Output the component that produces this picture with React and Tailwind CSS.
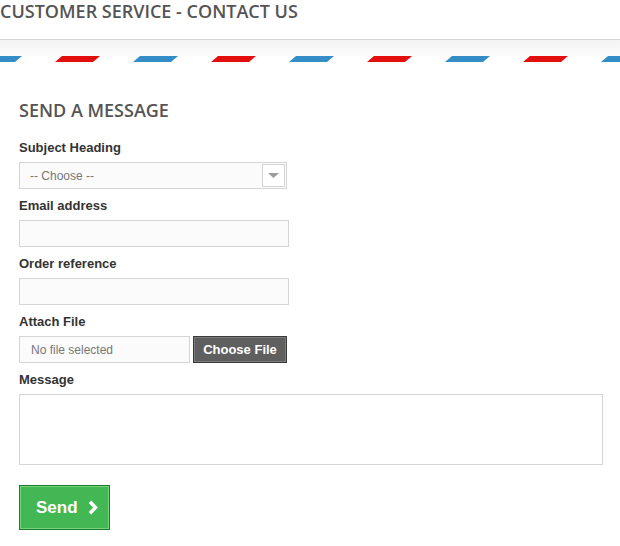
function Airmail() {
    return (
        <svg className="block w-full h-[6px]" xmlns="http://www.w3.org/2000/svg">
            <defs>
                <pattern id="airmail" x="-23" y="0" width="156" height="6" patternUnits="userSpaceOnUse">
                    <polygon points="0,6 7,0 45,0 38,6" fill="#348dc6" />
                    <polygon points="78,6 85,0 123,0 116,6" fill="#e30e0e" />
                </pattern>
            </defs>
            <rect width="100%" height="6" fill="url(#airmail)" />
        </svg>
    );
}

function Field({ label, children }) {
    return (
        <div className="mb-[9px]">
            <label className="block text-[13px] leading-[16px] font-bold text-[#333] mb-[6px]">{label}</label>
            {children}
        </div>
    );
}

export default function App() {
    return (
        <div className="w-[620px] h-[546px] bg-white overflow-hidden font-['Liberation_Sans',Arial,sans-serif]">
            <h1 className="font-['Open_Sans',sans-serif] text-[18px] leading-[22px] font-semibold uppercase text-[#555454] pb-[17px] border-b border-[#d6d4d4]">
                Customer Service - Contact us
            </h1>
            <div className="h-4 bg-gradient-to-b from-[#f3f3f3] to-[#fbfbfb]" />
            <Airmail />

            <form className="pl-[19px] pt-[37px]">
                <h3 className="font-['Open_Sans',sans-serif] text-[18px] leading-[22px] font-semibold uppercase text-[#555454] mb-[19px]">
                    Send a message
                </h3>

                <Field label="Subject Heading">
                    <div className="relative w-[268px] h-[27px] bg-[#fbfbfb] border border-[#d6d4d4] flex items-center pl-[10px] text-[12px] text-[#777]">
                        -- Choose --
                        <div className="absolute right-[1px] top-[1px] w-[23px] h-[23px] bg-white border border-[#d6d4d4] flex items-center justify-center">
                            <svg width="11" height="5" viewBox="0 0 11 5">
                                <polygon points="0,0 11,0 5.5,5" fill="#9c9c9c" />
                            </svg>
                        </div>
                    </div>
                </Field>

                <Field label="Email address">
                    <div className="w-[270px] h-[27px] bg-[#fbfbfb] border border-[#d6d4d4]" />
                </Field>

                <Field label="Order reference">
                    <div className="w-[270px] h-[27px] bg-[#fbfbfb] border border-[#d6d4d4]" />
                </Field>

                <Field label="Attach File">
                    <div className="flex gap-[3px]">
                        <div className="w-[171px] h-[27px] bg-[#fbfbfb] border border-[#d6d4d4] flex items-center pl-[11px] text-[12px] text-[#777]">
                            No file selected
                        </div>
                        <div className="w-[94px] h-[27px] bg-[#5f5f5f] border border-[#3a3a3a] shadow-[inset_0_0_0_1px_#7c7c7c] flex items-center justify-center text-[13px] font-bold text-white">
                            Choose File
                        </div>
                    </div>
                </Field>

                <Field label="Message">
                    <div className="w-[584px] h-[71px] bg-white border border-[#d6d4d4]" />
                </Field>

                <div className="pt-[11px]">
                    <button
                        type="button"
                        className="w-[91px] h-[45px] bg-[#43b754] border border-[#1d7a2e] shadow-[inset_0_0_0_1px_#74d578] flex items-center pl-[16px] text-[17px] font-bold text-white"
                    >
                        Send
                        <svg className="ml-[10px]" width="10" height="15" viewBox="0 0 10 15">
                            <polyline points="2,1.8 7.5,7.5 2,13.2" fill="none" stroke="white" strokeWidth="3.4" />
                        </svg>
                    </button>
                </div>
            </form>
        </div>
    );
}
